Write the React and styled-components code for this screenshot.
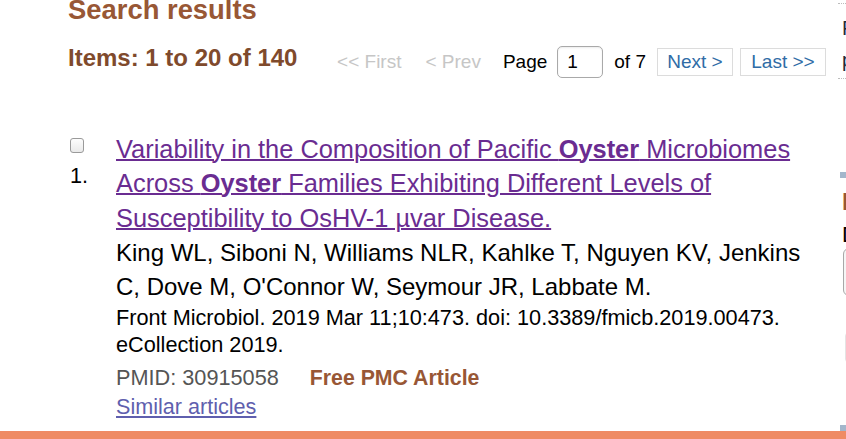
import React from 'react'
import styled, { createGlobalStyle } from 'styled-components'

const GlobalStyle = createGlobalStyle`
  html, body {
    margin: 0;
    padding: 0;
    background: #fff;
    overflow: hidden;
  }
  body {
    font-family: "Liberation Sans", Arial, Helvetica, sans-serif;
    color: #000;
  }
`

const Page = styled.div`
  width: 846px;
  height: 439px;
  overflow: hidden;
  display: grid;
  grid-template-rows: 431px 8px;
`

const Columns = styled.div`
  display: flex;
  overflow: hidden;
`

const Main = styled.main`
  flex: 0 0 758px;
  padding: 0 12px 0 68px;
`

const Heading = styled.h2`
  margin: -4.5px 0 0;
  font-size: 27.4px;
  line-height: 27px;
  font-weight: bold;
  color: #985735;
`

const ResultsBar = styled.div`
  display: flex;
  justify-content: space-between;
  align-items: flex-start;
  margin-top: 23px;
`

const ItemsCount = styled.h3`
  margin: -2px 0 0;
  font-size: 24px;
  line-height: 28px;
  font-weight: bold;
  color: #7f4a2c;
`

const Pager = styled.div`
  display: flex;
  align-items: center;
  height: 32px;
  font-size: 19px;
`

const PagerText = styled.span`
  color: ${p => (p.$disabled ? '#c6c6c6' : '#000')};
  margin-right: ${p => p.$gap || 0}px;
  white-space: nowrap;
`

const PageInput = styled.input`
  box-sizing: border-box;
  width: 46px;
  height: 32px;
  margin: 0 11px 0 0;
  padding: 0 0 0 9px;
  border: 1px solid #a9a9a9;
  border-radius: 5px;
  font-family: inherit;
  font-size: 19px;
  color: #000;
  box-shadow: inset 0 1px 2px rgba(0, 0, 0, 0.08);
  outline: none;
`

const PagerButton = styled.a`
  box-sizing: border-box;
  display: flex;
  align-items: center;
  justify-content: center;
  width: ${p => p.$w}px;
  height: 28px;
  margin-right: ${p => p.$gap || 0}px;
  border: 1px solid #dcdcdc;
  color: #2f6ca6;
  text-decoration: none;
  white-space: nowrap;
`

const Result = styled.div`
  display: grid;
  grid-template-columns: 48px 1fr;
  margin-top: 54px;
`

const Marker = styled.div`
  display: flex;
  flex-direction: column;
  align-items: flex-start;
  padding: 6px 0 0 2px;
`

const Check = styled.input`
  appearance: none;
  box-sizing: border-box;
  width: 14px;
  height: 15px;
  margin: 0;
  border: 1px solid #9a9a9a;
  border-radius: 3px;
  background: linear-gradient(#fdfdfd, #e9e9e9);
`

const Number = styled.span`
  margin-top: 9px;
  font-size: 21.6px;
  line-height: 27px;
`

const Body = styled.div`
  display: flex;
  flex-direction: column;
  align-items: flex-start;
`

const TitleLink = styled.a`
  font-size: 25.4px;
  line-height: 34.5px;
  color: #6a2c91;
  text-decoration: underline;
  text-decoration-thickness: 2px;
  b {
    font-weight: bold;
  }
`

const Authors = styled.p`
  margin: 1px 0 0;
  font-size: 24px;
  line-height: 34px;
`

const Meta = styled.p`
  margin: ${p => p.$top || 0}px 0 0;
  font-size: 21.7px;
  line-height: 27px;
  color: ${p => p.$color || '#000'};
`

const FreeTag = styled.span`
  margin-left: 31px;
  font-weight: bold;
  font-size: 21.3px;
  color: #985735;
`

const SmallLink = styled.a`
  margin-top: 1px;
  font-size: 21.6px;
  line-height: 27px;
  color: #5f5fae;
  text-decoration: underline;
`

const Sidebar = styled.aside`
  flex: 0 0 300px;
  display: flex;
  flex-direction: column;
`

const DisplayBox = styled.div`
  margin-top: 3px;
  padding: 8px 0 2px 4px;
  border-top: 1px dotted #bcbcbc;
  border-bottom: 1px dotted #bcbcbc;
  font-size: 20px;
  line-height: 32px;
  color: #1e2a3a;
`

const Portlet = styled.div`
  box-sizing: border-box;
  height: 259px;
  margin: 93px 0 0 2px;
  padding: 10px 0 0 2px;
  border-top: 6px solid #a3b6cb;
  border-bottom: 6px solid #a3b6cb;
`

const PortletTitle = styled.h4`
  margin: 0;
  font-size: 24px;
  line-height: 28px;
  font-weight: bold;
  color: #985735;
`

const Label = styled.div`
  margin-top: 8px;
  font-size: 22px;
  line-height: 22px;
  color: #000;
`

const Select = styled.div`
  box-sizing: border-box;
  height: 48px;
  margin: 2px 0 0 1px;
  border: 1px solid #a8a8a8;
  border-radius: 6px;
  background: #f6f6f6;
`

const GhostButton = styled.div`
  box-sizing: border-box;
  height: 31px;
  margin: 36px 0 0 3px;
  border: 1px solid #e4e4e4;
  border-radius: 4px;
  background: #fdfdfd;
`

const Footer = styled.div`
  background: #ef8b64;
`

export default function App() {
  return (
    <Page>
      <GlobalStyle />
      <Columns>
        <Main>
          <Heading>Search results</Heading>
          <ResultsBar>
            <ItemsCount>Items: 1 to 20 of 140</ItemsCount>
            <Pager>
              <PagerText $disabled $gap={24}>&lt;&lt; First</PagerText>
              <PagerText $disabled $gap={22}>&lt; Prev</PagerText>
              <PagerText $gap={10}>Page</PagerText>
              <PageInput defaultValue="1" />
              <PagerText $gap={11}>of 7</PagerText>
              <PagerButton href="#" $w={76} $gap={7}>Next &gt;</PagerButton>
              <PagerButton href="#" $w={86}>Last &gt;&gt;</PagerButton>
            </Pager>
          </ResultsBar>

          <Result>
            <Marker>
              <Check type="checkbox" />
              <Number>1.</Number>
            </Marker>
            <Body>
              <TitleLink href="#">
                Variability in the Composition of Pacific <b>Oyster</b> Microbiomes Across <b>Oyster</b> Families
                Exhibiting Different Levels of Susceptibility to OsHV-1 µvar Disease.
              </TitleLink>
              <Authors>
                King WL, Siboni N, Williams NLR, Kahlke T, Nguyen KV, Jenkins C, Dove M, O'Connor W, Seymour JR,
                Labbate M.
              </Authors>
              <Meta>
                Front Microbiol. 2019 Mar 11;10:473. doi: 10.3389/fmicb.2019.00473. eCollection 2019.
              </Meta>
              <Meta $top={6} $color="#555">
                PMID: 30915058<FreeTag>Free PMC Article</FreeTag>
              </Meta>
              <SmallLink href="#">Similar articles</SmallLink>
            </Body>
          </Result>
        </Main>

        <Sidebar>
          <DisplayBox>
            <div>Format: Summary</div>
            <div>per page: 20</div>
          </DisplayBox>
          <Portlet>
            <PortletTitle>Find related data</PortletTitle>
            <Label>Database:</Label>
            <Select />
            <GhostButton />
          </Portlet>
        </Sidebar>
      </Columns>
      <Footer />
    </Page>
  )
}
